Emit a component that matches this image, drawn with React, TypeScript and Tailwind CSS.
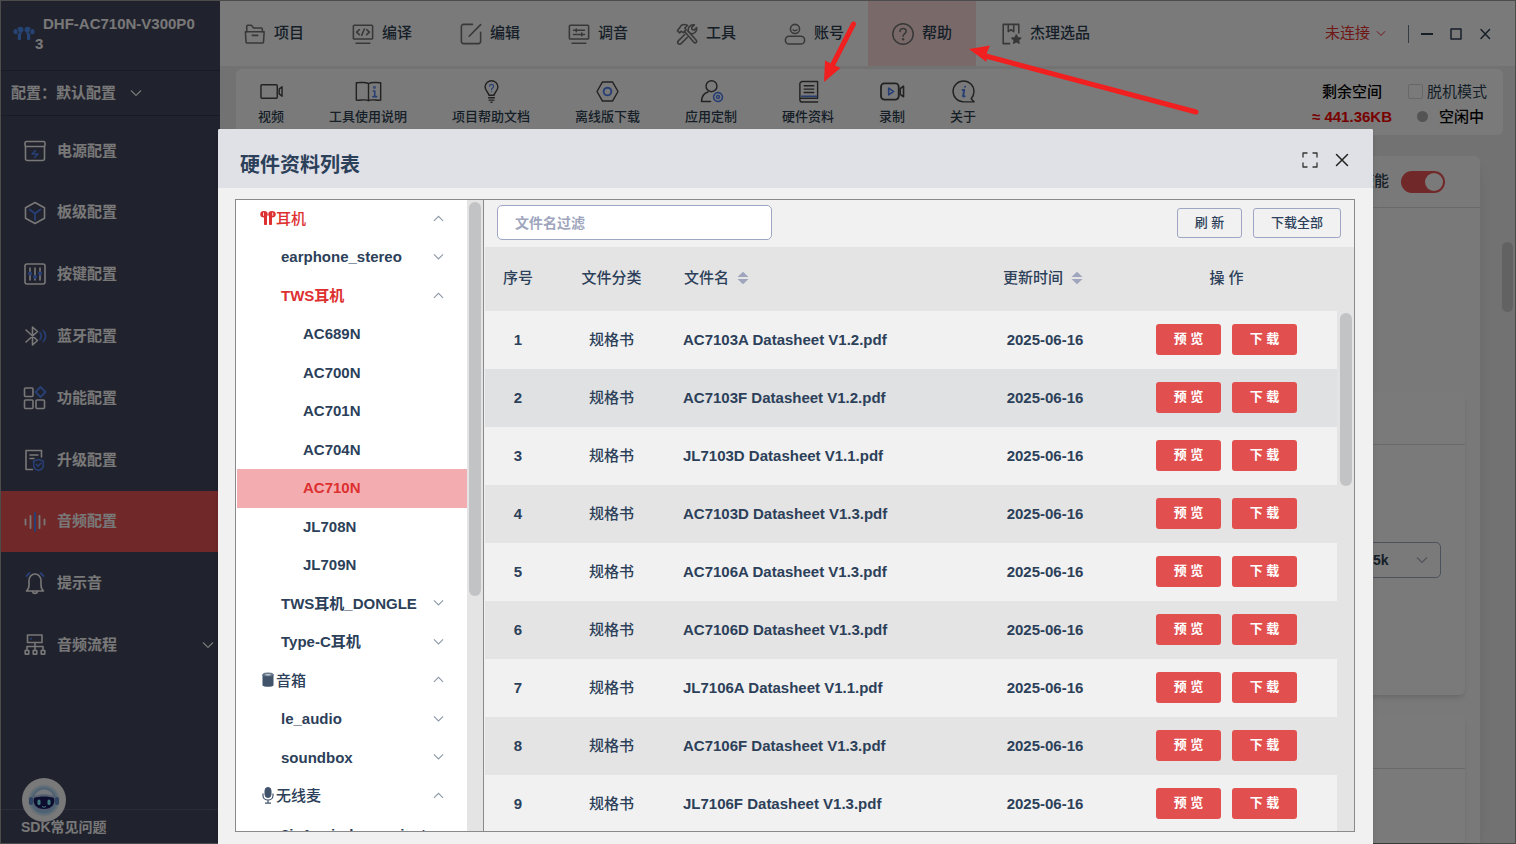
import type { ReactNode } from "react";

const BLUE = "#4f7fe8";

type IconProps = { children: ReactNode; className?: string; box?: string; width?: number };

function Icon({ children, className = "size-6", box = "0 0 24 24", width = 1.5 }: IconProps) {
  return (
    <svg
      viewBox={box}
      className={`shrink-0 ${className}`}
      fill="none"
      stroke="currentColor"
      strokeWidth={width}
      strokeLinecap="round"
      strokeLinejoin="round"
      aria-hidden="true"
    >
      {children}
    </svg>
  );
}

function Chevron({ up = false, className = "w-3" }: { up?: boolean; className?: string }) {
  return (
    <svg viewBox="0 0 12 8" className={`shrink-0 ${className}`} fill="none" stroke="currentColor" strokeWidth="1.2" aria-hidden="true">
      <path d={up ? "M1 6.5 6 1.5l5 5" : "M1 1.5l5 5 5-5"} />
    </svg>
  );
}

function Earbuds() {
  return (
    <svg viewBox="0 0 22 15" className="w-[22px] shrink-0" fill="currentColor" aria-hidden="true">
      <ellipse cx="7.300" cy="3.800" rx="3.200" ry="3" />
      <ellipse cx="2.600" cy="5.600" rx="2.200" ry="2.700" />
      <rect x="4.800" y="8" width="3.200" height="6" rx=".8" />
      <path d="M4 7.500 8.500 6v2.500L5 9z" />
      <ellipse cx="14.700" cy="3.800" rx="3.200" ry="3" />
      <ellipse cx="19.400" cy="5.600" rx="2.200" ry="2.700" />
      <rect x="14" y="8" width="3.200" height="6" rx=".8" />
      <path d="m18 7.500-4.500-1.500v2.500L17 9z" />
      <path d="M4.300 2.500 5.600 8M17.700 2.500 16.400 8" stroke="#40445a" strokeWidth=".8" />
    </svg>
  );
}

function EarbudsSmall() {
  return (
    <svg viewBox="0 0 16 16" className="mb-0.5 size-4 shrink-0" fill="currentColor" aria-hidden="true">
      <ellipse cx="4" cy="4.300" rx="3.700" ry="3.300" />
      <rect x="4" y="3.500" width="3" height="11.500" rx=".8" />
      <ellipse cx="12" cy="4.300" rx="3.700" ry="3.300" />
      <rect x="9" y="3.500" width="3" height="11.500" rx=".8" />
      <path d="M3.500 2.500v3.300M12.700 2.500v3.300" stroke="#fff" strokeWidth=".8" />
    </svg>
  );
}

const menu: { label: string; icon: ReactNode; active?: boolean }[] = [
  {
    label: "项目",
    icon: (
      <>
        <path d="M3 9.500v-6a1 1 0 0 1 1-1h4l2.500 3H19a1 1 0 0 1 1 1V9.500" />
        <path d="M1.500 9.500h20.500l-.7 11a1.500 1.500 0 0 1-1.500 1.300H3.700a1.500 1.500 0 0 1-1.500-1.300zM9 13.500h6" />
      </>
    ),
  },
  {
    label: "编译",
    icon: (
      <>
        <rect x="1.500" y="2.500" width="21" height="15" rx="1" />
        <path d="M4.500 22h15M8 7.300 5 10l3 2.700M16 7.300l3 2.700-3 2.700M13.500 6.500l-3 7" />
      </>
    ),
  },
  {
    label: "编辑",
    icon: <path d="M13.500 1.500H4A2.500 2.500 0 0 0 1.500 4v16A2.500 2.500 0 0 0 4 22.500h16a2.500 2.500 0 0 0 2.500-2.500V10M22.500 1.800 10 14.500" />,
  },
  {
    label: "调音",
    icon: (
      <>
        <rect x="1.500" y="2.500" width="21" height="15" rx="1" />
        <path d="M4.500 22h15M6 8h12M6 12.500h12M9 6.500v3M15 11v3" />
      </>
    ),
  },
  {
    label: "工具",
    icon: (
      <>
        <path d="M1.500 8.500 6 2.500c2.500-1.300 4.500-1 6.500.2L9.500 5.500l1.500 2-3 3L5.500 9l-1.500 1.800zM10 10l10 11.500a1.700 1.700 0 0 0 2.300-2.300L13 8.500" />
        <path d="M13.500 9.500c-1-4 1.500-8 6.500-7.500l-3 3 .5 2.200 2.300.5L22.500 5c.8 4-3 7.500-6.500 6.500M9.500 12.500 2.500 19.500a2 2 0 0 0 3 3l7-7" />
      </>
    ),
  },
  {
    label: "账号",
    icon: (
      <>
        <circle cx="12" cy="6.500" r="5" />
        <path d="M10 7.500c1 1.200 3 1.200 4 0" />
        <rect x="1.500" y="14.500" width="21" height="8.500" rx="4.200" />
      </>
    ),
  },
  {
    label: "帮助",
    active: true,
    icon: (
      <>
        <circle cx="12" cy="12" r="11.200" />
        <path d="M8.700 9.200c.2-4.400 6.800-4.200 6.800-.2 0 2.500-3.400 2.600-3.400 5.500" />
        <circle cx="12.100" cy="17.700" r=".6" fill="currentColor" />
      </>
    ),
  },
  {
    label: "杰理选品",
    icon: (
      <>
        <path d="M10.500 22.500H3.500V1.500h17V11M9 1.500v8l3-2.200 3 2.200v-8" />
        <path d="m17.800 13.200 1.400 3 3.300.3-2.500 2.200.8 3.200-3-1.700-2.900 1.700.7-3.200-2.500-2.200 3.300-.3z" fill="currentColor" />
      </>
    ),
  },
];

const tools: { label: string; icon: ReactNode }[] = [
  {
    label: "视频",
    icon: (
      <>
        <rect x="1" y="5" width="17" height="14" rx="1" />
        <path d="M20 9.500 23 7v10l-3-2.500z" />
      </>
    ),
  },
  {
    label: "工具使用说明",
    icon: (
      <>
        <path d="M12 3.800C8.500 1.500 4.500 3-.7 2.800V21c4.200.6 9-1.500 12.700.6 3.700-2.100 8.500 0 12.700-.6V2.800C19.500 3 15.500 1.500 12 3.800zv17.800" />
        <g stroke={BLUE} strokeWidth="2">
          <path d="M17 11.500h1.500V17M16.500 17.300h4" strokeWidth="1.700" />
          <circle cx="18.200" cy="7.700" r=".5" />
        </g>
      </>
    ),
  },
  {
    label: "项目帮助文档",
    icon: (
      <>
        <path d="M9.300 16c0-3-4-4.500-4-9A6.700 6.700 0 0 1 12 .7 6.700 6.700 0 0 1 18.700 7c0 4.500-4 6-4 9zM9 18.500h6M9.500 21h5M11.500 23.300h1" />
        <path d="M10 6.500c.2-2.800 4.200-2.500 4.200.1 0 1.700-2.100 1.600-2.100 3.400m0 2v.1" stroke={BLUE} strokeWidth="1.300" />
      </>
    ),
  },
  {
    label: "离线版下载",
    icon: (
      <>
        <path d="M6.800 2h10.400L23 12l-5.800 10H6.800L1 12z" />
        <circle cx="12" cy="12" r="4" stroke={BLUE} strokeWidth="2" />
      </>
    ),
  },
  {
    label: "应用定制",
    icon: (
      <>
        <circle cx="12" cy="6.500" r="5.700" />
        <path d="M11 22.500H1.500c.3-5.500 3-9 7-10" />
        <circle cx="18.800" cy="17.800" r="4.600" stroke={BLUE} strokeDasharray="2.600 1" strokeWidth="1.700" />
        <circle cx="18.800" cy="17.800" r="1.600" stroke={BLUE} />
      </>
    ),
  },
  {
    label: "硬件资料",
    icon: (
      <>
        <path d="M21.500 19V1.500H5.500A2.500 2.500 0 0 0 3 4V20.500A2.500 2.500 0 0 0 5.500 23h16M3.500 19h18M7.500 6h10M7.500 9.500h10M7.500 13h10" />
        <path d="M5 17h15.500" stroke={BLUE} strokeWidth="1.700" />
      </>
    ),
  },
  {
    label: "录制",
    icon: (
      <>
        <rect x="0" y="3.500" width="18.500" height="17" rx="3.500" strokeWidth="1.900" />
        <path d="m20 9 3.500-2.500v11L20 15z" strokeWidth="1.700" />
        <path d="M8 8.500v7l5-3.500z" stroke={BLUE} strokeWidth="1.700" />
      </>
    ),
  },
  {
    label: "关于",
    icon: (
      <>
        <path d="M23 22.800H12A10.900 10.900 0 1 1 22.900 12c0 3-1 5.500-2.900 7.500z" />
        <g stroke={BLUE} strokeWidth="2">
          <path d="M11 10.500h1.800L11.500 17h1.700" />
          <path d="M13.600 6.900v.1" />
        </g>
      </>
    ),
  },
];

const nav: { label: string; icon: ReactNode; active?: boolean; expandable?: boolean }[] = [
  {
    label: "电源配置",
    icon: (
      <>
        <rect x="2" y="2.500" width="20" height="5" rx="1.500" />
        <path d="M2.500 7.500v12a2 2 0 0 0 2 2h15a2 2 0 0 0 2-2v-12" />
        <path d="m12.500 11.500-3.500 3.500h6L11.500 18.500" stroke={BLUE} />
      </>
    ),
  },
  {
    label: "板级配置",
    icon: (
      <>
        <path d="m12 1.500 9.500 5.300v10.400L12 22.500l-9.500-5.300V6.800z" />
        <path d="m6.500 8.500 5.500 4 5.500-4M12 12.500v6.500" stroke={BLUE} strokeWidth="1.800" />
      </>
    ),
  },
  {
    label: "按键配置",
    icon: (
      <>
        <rect x="2" y="2" width="20" height="20" rx="2" />
        <path d="M7 6v12M12 6v12M17 6v12" />
        <g fill={BLUE} stroke={BLUE}>
          <circle cx="7" cy="11.500" r="1.300" />
          <circle cx="12" cy="15" r="1.300" />
          <circle cx="17" cy="11.500" r="1.300" />
        </g>
      </>
    ),
  },
  {
    label: "蓝牙配置",
    icon: (
      <>
        <path d="m3 6 11.500 10.500L9.500 21V3l5 4.500L3 18" />
        <path d="M17 8.500c1.500 2 1.500 5 0 7M20.300 6.500c3 3.500 3 7.500 0 11" stroke={BLUE} />
      </>
    ),
  },
  {
    label: "功能配置",
    icon: (
      <>
        <rect x="1.500" y="2" width="8.500" height="8.500" rx="1" />
        <rect x="1.500" y="14" width="8.500" height="8.500" rx="1" />
        <rect x="13" y="14" width="8.500" height="8.500" rx="1" />
        <path d="m17.500 1 5 5-5 5-5-5z" stroke={BLUE} strokeWidth="1.800" />
      </>
    ),
  },
  {
    label: "升级配置",
    icon: (
      <>
        <path d="M9.500 21.500H3V2.500h15.500V9M7 7h8M7 10.500h4" />
        <path d="m15.500 11.500 4.800 1.500v5c0 2-2 3.500-4.800 4.500-2.800-1-4.800-2.500-4.800-4.500v-5z" stroke={BLUE} />
        <path d="m13.300 16.500 1.700 1.700 2.800-3" stroke={BLUE} />
      </>
    ),
  },
  {
    label: "音频配置",
    active: true,
    icon: (
      <>
        <path d="M2.500 9.500v5M7.500 6v12M16.500 6v12M21.500 9.500v5" strokeWidth="1.800" />
        <path d="M12 3v18" stroke={BLUE} strokeWidth="2" />
      </>
    ),
  },
  {
    label: "提示音",
    icon: (
      <>
        <path d="M3.500 20h17c-1.800-1.500-2.500-3-2.500-6V10C18 6.200 15.500 3 12 3S6 6.200 6 10v4c0 3-.7 4.500-2.500 6zM9.500 20.500c.5 2.500 4.500 2.500 5 0" />
        <path d="M3.500 5 6.500 2M20.500 5l-3-3" stroke={BLUE} strokeWidth="1.800" />
      </>
    ),
  },
  {
    label: "音频流程",
    expandable: true,
    icon: (
      <>
        <rect x="4.500" y="2" width="14.500" height="7.500" />
        <path d="M12 9.500v8M4 17v-3.500h16V17" />
        <path d="M7.700 5.700h.6" stroke={BLUE} strokeWidth="1.800" />
        <rect x="2.200" y="17.500" width="3.600" height="3.600" />
        <rect x="10.200" y="17.500" width="3.600" height="3.600" />
        <rect x="18.200" y="17.500" width="3.600" height="3.600" />
      </>
    ),
  },
];

type TreeItem = { label: string; level: 0 | 1 | 2; chevron?: "up" | "down"; red?: boolean; selected?: boolean; icon?: ReactNode };

const tree: TreeItem[] = [
  { label: "耳机", level: 0, chevron: "up", red: true, icon: <EarbudsSmall /> },
  { label: "earphone_stereo", level: 1, chevron: "down" },
  { label: "TWS耳机", level: 1, chevron: "up", red: true },
  { label: "AC689N", level: 2 },
  { label: "AC700N", level: 2 },
  { label: "AC701N", level: 2 },
  { label: "AC704N", level: 2 },
  { label: "AC710N", level: 2, red: true, selected: true },
  { label: "JL708N", level: 2 },
  { label: "JL709N", level: 2 },
  { label: "TWS耳机_DONGLE", level: 1, chevron: "down" },
  { label: "Type-C耳机", level: 1, chevron: "down" },
  {
    label: "音箱",
    level: 0,
    chevron: "up",
    icon: (
      <svg viewBox="0 0 16 16" className="mb-0.5 size-4 shrink-0" aria-hidden="true">
        <path d="M2.500 3v10.500c1 1.800 10 1.800 11 0V3z" fill="#41546b" />
        <ellipse cx="8" cy="2.800" rx="5.500" ry="1.900" fill="#6f7f90" stroke="#41546b" strokeWidth=".7" />
        <ellipse cx="8" cy="2.800" rx="2.800" ry=".8" fill="#fff" fillOpacity=".6" />
      </svg>
    ),
  },
  { label: "le_audio", level: 1, chevron: "down" },
  { label: "soundbox", level: 1, chevron: "down" },
  {
    label: "无线麦",
    level: 0,
    chevron: "up",
    icon: (
      <svg viewBox="0 0 16 17" className="mb-0.5 w-4 shrink-0" fill="none" stroke="#41546b" aria-hidden="true">
        <rect x="5" y=".5" width="6" height="10" rx="3" fill="#41546b" />
        <path d="M3 6.500v2c0 6 10 6 10 0v-2M8 13v3M5 16.200h6" strokeWidth="1.200" />
      </svg>
    ),
  },
  { label: "2in1_wireless_mic_t", level: 1 },
];

const indent = ["pl-[23px]", "pl-11", "pl-[66px]"];

const files = [
  "AC7103A Datasheet V1.2.pdf",
  "AC7103F Datasheet V1.2.pdf",
  "JL7103D Datasheet V1.1.pdf",
  "AC7103D Datasheet V1.3.pdf",
  "AC7106A Datasheet V1.3.pdf",
  "AC7106D Datasheet V1.3.pdf",
  "JL7106A Datasheet V1.1.pdf",
  "AC7106F Datasheet V1.3.pdf",
  "JL7106F Datasheet V1.3.pdf",
];

function Sorter() {
  return (
    <svg viewBox="0 0 12 14" className="h-3.5 w-3" fill="#9ea5bd" aria-hidden="true">
      <path d="M6 .8 11.500 6H.5zM6 13.200.5 8h11z" />
    </svg>
  );
}

function Sidebar() {
  return (
    <aside className="flex w-[219px] shrink-0 flex-col bg-[#40445a] text-[15px] font-bold text-[#f0f0f0]">
      <div className="flex h-[70px] items-center gap-1 border-b border-[#32354a] pb-1 pl-3">
        <span className="text-[#4b86e6]">
          <Earbuds />
        </span>
        <h1 className="min-w-0 flex-1 leading-5">
          <span className="block pl-1">DHF-AC710N-V300P0</span>
          <span className="-ml-1 block">3</span>
        </h1>
      </div>
      <button type="button" className="flex h-[45px] items-center border-b border-[#32354a] pl-2.5 text-left">
        配置：默认配置
        <span className="ml-3.5 flex">
          <Chevron className="w-3" />
        </span>
      </button>
      <nav className="mt-1 grid h-[556px] grid-rows-9">
        {nav.map((item) => (
          <a
            key={item.label}
            href="#"
            className={`flex items-center gap-2.5 pl-[22px] pr-1.5 ${item.active ? "bg-[#e25052]" : ""}`}
          >
            <Icon width={1.6}>{item.icon}</Icon>
            <span className="flex-1">{item.label}</span>
            {item.expandable && <Chevron />}
          </a>
        ))}
      </nav>
      <div className="relative mt-auto h-[34px] border-t border-[#54586c] pl-5 pt-[7px] text-sm">
        <svg viewBox="0 0 44 44" className="absolute -top-8 left-[21px] size-11" aria-hidden="true">
          <defs>
            <radialGradient id="halo">
              <stop offset="60%" stopColor="#6fb4e6" />
              <stop offset="100%" stopColor="#f2f2f2" />
            </radialGradient>
          </defs>
          <circle cx="22" cy="22" r="22" fill="#f2f2f2" />
          <circle cx="22" cy="22.500" r="16.500" fill="url(#halo)" />
          <path d="M10.500 22c0-7 5-11 11.500-11s11.500 4 11.500 11-5 11.500-11.500 11.500S10.500 29 10.500 22z" fill="#a9c0e4" />
          <path d="M13 18c1-4 5-6.500 9-6.500s8 2.500 9 6.500c-5-2.500-13-2.500-18 0z" fill="#e8f1fb" />
          <rect x="7" y="19" width="4" height="8" rx="2" fill="#5f86c4" />
          <rect x="33" y="19" width="4" height="8" rx="2" fill="#5f86c4" />
          <path d="M12 20c6-2 14-2 20 0 1.500 6-2 11-10 11s-11.500-5-10-11z" fill="#1b1c5e" />
          <rect x="15.500" y="21.500" width="3" height="5.500" rx="1.500" fill="#7ef0ff" />
          <rect x="25.500" y="21.500" width="3" height="5.500" rx="1.500" fill="#7ef0ff" />
          <path d="M20 28.500c1.200.8 2.800.8 4 0" stroke="#7ef0ff" fill="none" />
        </svg>
        <span className="relative">SDK常见问题</span>
      </div>
    </aside>
  );
}

function Header() {
  return (
    <header className="flex h-[65px] shrink-0 items-center bg-[#f4f4f4] text-[15px] font-medium text-[#2c3e50]">
      <nav className="flex h-full">
        {menu.map((item) => (
          <a
            key={item.label}
            href="#"
            className={`flex items-center gap-2 pl-6 pr-6 ${item.active ? "bg-[#f2d3d2]" : ""}`}
          >
            <span className="text-[#707070]">
              <Icon className="size-[22px]" width={1.7}>
                {item.icon}
              </Icon>
            </span>
            {item.label}
          </a>
        ))}
      </nav>
      <div className="ml-auto flex items-center pr-6">
        <button type="button" className="flex items-center gap-1.5 font-normal text-[#e0302f]">
          未连接
          <Chevron className="w-2.5" />
        </button>
        <span className="ml-[22px] h-[18px] w-px bg-[#6c7786]" />
        <button type="button" aria-label="最小化" className="ml-3">
          <Icon className="h-3 w-3" box="0 0 12 12">
            <path d="M0 6h12" strokeWidth="2" />
          </Icon>
        </button>
        <button type="button" aria-label="最大化" className="ml-[17px]">
          <Icon className="h-3 w-3" box="0 0 12 12">
            <rect x="1" y="1" width="10" height="10" />
          </Icon>
        </button>
        <button type="button" aria-label="关闭" className="ml-[17px]">
          <Icon className="h-3 w-3" box="0 0 12 12">
            <path d="m2 1.500 8.500 9M10.500 1.500l-8.500 9" />
          </Icon>
        </button>
      </div>
    </header>
  );
}

function Toolbar() {
  return (
    <div className="ml-4 mr-3 mt-[3px] flex h-[66px] shrink-0 items-center rounded-md bg-[#f5f5f5] pl-[22px] pr-4 pt-0.5 text-[15px] text-[#2c3e50]">
      <div className="flex gap-[45px] text-[13px] font-medium">
        {tools.map((tool) => (
          <button key={tool.label} type="button" className="flex flex-col items-center gap-1 leading-5">
            <span className="text-[#444]">
              <Icon className="size-[23px] overflow-visible">{tool.icon}</Icon>
            </span>
            {tool.label}
          </button>
        ))}
      </div>
      <div className="ml-auto flex flex-col gap-[5px] pt-0.5 text-center leading-5 text-black">
        <span className="font-medium">剩余空间</span>
        <span className="font-bold text-[#f00000]">≈ 441.36KB</span>
      </div>
      <div className="ml-4 flex flex-col gap-[5px] pt-0.5 leading-5">
        <label className="flex items-center gap-1">
          <input type="checkbox" className="size-[15px] appearance-none rounded-xs border border-[#cfcfcf]" />
          脱机模式
        </label>
        <span className="flex items-center gap-[11px] pl-[9px] font-medium text-black">
          <span className="size-[11px] rounded-full bg-[#a8a8a8]" />
          空闲中
        </span>
      </div>
    </div>
  );
}

function Settings() {
  return (
    <div className="flex min-h-0 flex-1 gap-[22px] pl-4 pr-0.5 pt-[21px] text-[15px] text-[#2c3e50]">
      <main className="flex flex-1 flex-col rounded-t-md bg-[#f3f3f3] shadow-lg">
        <div className="flex h-[52px] shrink-0 items-center justify-end gap-3 border-b border-[#d2d2d2] pr-[35px]">
          <label htmlFor="enable" className="font-medium">
            使能
          </label>
          <span className="relative flex">
            <input
              id="enable"
              type="checkbox"
              defaultChecked
              className="h-[22px] w-11 appearance-none rounded-full bg-[#e25052]"
            />
            <span className="pointer-events-none absolute right-0.5 top-0.5 size-[18px] rounded-full bg-[#f5f5f5]" />
          </span>
        </div>
        <section className="mr-[15px] mt-[185px] h-[302px] shrink-0 rounded-md bg-[#f5f5f5] shadow-md">
          <div className="h-[52px] border-b border-[#d2d2d2]" />
          <div className="relative flex justify-end pr-6 pt-[97px]">
            <select
              aria-label="频率"
              className="h-9 w-[180px] appearance-none rounded-[5px] border border-[#9aa3b8] pl-[111px] text-sm font-bold"
            >
              <option>5k</option>
            </select>
            <span className="pointer-events-none absolute right-[37px] top-[111px] text-[#a0a6b4]">
              <Chevron className="w-3" />
            </span>
          </div>
        </section>
        <section className="mr-[15px] mt-5 flex-1 rounded-t-md bg-[#f5f5f5] shadow-md">
          <div className="h-[54px] border-b border-[#d2d2d2]" />
        </section>
      </main>
      <div className="w-[11px] pt-[86px]">
        <div className="h-[70px] rounded-full bg-[#c4c4c4]" />
      </div>
    </div>
  );
}

function DeviceTree() {
  return (
    <div className="flex w-[248px] shrink-0 border-r border-[#8a8a8a] bg-[#e4e4e4]">
      <div className="min-h-0 flex-1 overflow-hidden bg-white">
        <ul className="grid h-[654px] auto-rows-fr text-[15px] font-bold">
          {tree.map((item) => (
            <li key={item.label} className="min-h-0">
              <button
                type="button"
                className={`ml-px flex h-full w-full items-center pr-6 text-left ${indent[item.level]} ${
                  item.red ? "text-[#dd3030]" : ""
                } ${item.selected ? "bg-[#f3acaf]" : ""}`}
              >
                {item.icon}
                <span className={`flex-1 ${item.level === 0 ? "font-medium" : ""}`}>{item.label}</span>
                {item.chevron && (
                  <span className="pb-0.5 text-[#8d98a8]">
                    <Chevron up={item.chevron === "up"} className="w-[11px]" />
                  </span>
                )}
              </button>
            </li>
          ))}
        </ul>
      </div>
      <div className="w-4 px-0.5 pt-0.5">
        <div className="h-[394px] rounded-full bg-[#c2c3c5]" />
      </div>
    </div>
  );
}

function FileTable() {
  return (
    <div className="flex min-h-0 flex-1 flex-col pl-px">
      <div className="flex h-[47px] shrink-0 items-center gap-[11px] pb-0.5 pl-3 pr-[13px]">
        <input
          type="text"
          aria-label="文件名过滤"
          placeholder="文件名过滤"
          className="mr-auto h-[35px] w-[275px] rounded-[5px] border border-[#9ea6c4] bg-white px-[17px] text-sm font-bold placeholder:text-[#9ea5bd]"
        />
        <button type="button" className="h-[30px] w-[65px] rounded-[3px] border border-[#9ea6c4] text-[13px] font-medium">
          刷 新
        </button>
        <button type="button" className="h-[30px] w-[88px] rounded-[3px] border border-[#9ea6c4] text-[13px] font-medium">
          下载全部
        </button>
      </div>
      <div className="flex min-h-0 flex-1 overflow-hidden bg-[#e4e4e4]">
        <div className="flex-1">
          <table className="w-full table-fixed text-[15px]">
            <colgroup>
              <col className="w-[66px]" />
              <col className="w-[121px]" />
              <col />
              <col className="w-[142px]" />
              <col className="w-[221px]" />
            </colgroup>
            <thead>
              <tr className="h-16 [&>th]:pb-0.5 [&>th]:font-medium">
                <th>序号</th>
                <th>文件分类</th>
                <th className="pl-3 text-left">
                  <span className="flex items-center gap-2">
                    文件名
                    <Sorter />
                  </span>
                </th>
                <th>
                  <span className="flex items-center justify-center gap-2 pr-1">
                    更新时间
                    <Sorter />
                  </span>
                </th>
                <th>操 作</th>
              </tr>
            </thead>
            <tbody>
              {files.map((file, i) => (
                <tr
                  key={file}
                  className={`h-[58px] text-center font-bold ${
                    i === 1 ? "bg-[#dfe1e3]" : i % 2 === 0 ? "bg-[#f1f1f1]" : "bg-[#e4e4e4]"
                  }`}
                >
                  <td>{i + 1}</td>
                  <td className="font-medium">规格书</td>
                  <td className="pl-[11px] text-left">{file}</td>
                  <td>2025-06-16</td>
                  <td className="pb-0.5">
                    <span className="flex justify-center gap-[11px]">
                      <button type="button" className="h-[31px] w-[65px] rounded-[3px] bg-[#e1504f] text-[13px] text-white">
                        预 览
                      </button>
                      <button type="button" className="h-[31px] w-[65px] rounded-[3px] bg-[#e1504f] text-[13px] text-white">
                        下 载
                      </button>
                    </span>
                  </td>
                </tr>
              ))}
            </tbody>
          </table>
        </div>
        <div className="w-[17px] pl-[3px] pr-0.5 pt-[66px]">
          <div className="h-[173px] rounded-full bg-[#c2c3c5]" />
        </div>
      </div>
    </div>
  );
}

function HardwareDialog() {
  return (
    <div
      role="dialog"
      aria-labelledby="dialog-title"
      className="flex flex-1 flex-col rounded-t-xs bg-[#f1f1f1] text-[#2c4059] shadow-md"
    >
      <div className="flex h-[59px] shrink-0 items-center rounded-t-xs bg-[#e0e1e7] pl-[22px] pr-[23px]">
        <h2 id="dialog-title" className="mt-3 flex-1 text-xl font-bold">
          硬件资料列表
        </h2>
        <button type="button" aria-label="全屏" className="mt-0.5 text-[#333]">
          <Icon className="size-4" box="0 0 16 16" width={1.3}>
            <path d="M1 5V1h4M11 1h4v4M15 11v4h-4M5 15H1v-4" />
          </Icon>
        </button>
        <button type="button" aria-label="关闭" className="ml-4 mt-0.5 text-[#222]">
          <Icon className="size-4" box="0 0 16 16">
            <path d="m2.500 2.500 11 11M13.500 2.500l-11 11" />
          </Icon>
        </button>
      </div>
      <div className="flex min-h-0 flex-1 pb-3 pl-[17px] pr-[18px] pt-[11px]">
        <div className="flex min-h-0 flex-1 overflow-hidden border border-[#8a8a8a]">
          <DeviceTree />
          <FileTable />
        </div>
      </div>
    </div>
  );
}

export default function App() {
  return (
    <div className="relative h-screen w-full overflow-hidden font-['Liberation_Sans','Noto_Sans_CJK_SC',sans-serif]">
      <div className="isolate flex h-full border border-[#999] bg-[#e4e4e4]">
        <Sidebar />
        <div className="flex min-w-0 flex-1 flex-col">
          <Header />
          <Toolbar />
          <Settings />
        </div>
      </div>
      <div className="absolute inset-0 flex bg-black/50 pl-[218px] pr-[143px] pt-[129px]">
        <HardwareDialog />
      </div>
      <svg
        viewBox="0 0 380 100"
        className="pointer-events-none absolute left-[820px] top-[20px] h-[100px] w-[380px]"
        fill="#f02020"
        aria-hidden="true"
      >
        <path d="M33.500 4 12 46M376 92 162 35" stroke="#f02020" strokeWidth="5" strokeLinecap="round" />
        <path d="M4 62 5 40.500l6 5 9.500 2.500zM4 62 5 40.500 20.500 48zM149 29 170 25.500l-3 7-.5 9.500z" />
      </svg>
    </div>
  );
}
